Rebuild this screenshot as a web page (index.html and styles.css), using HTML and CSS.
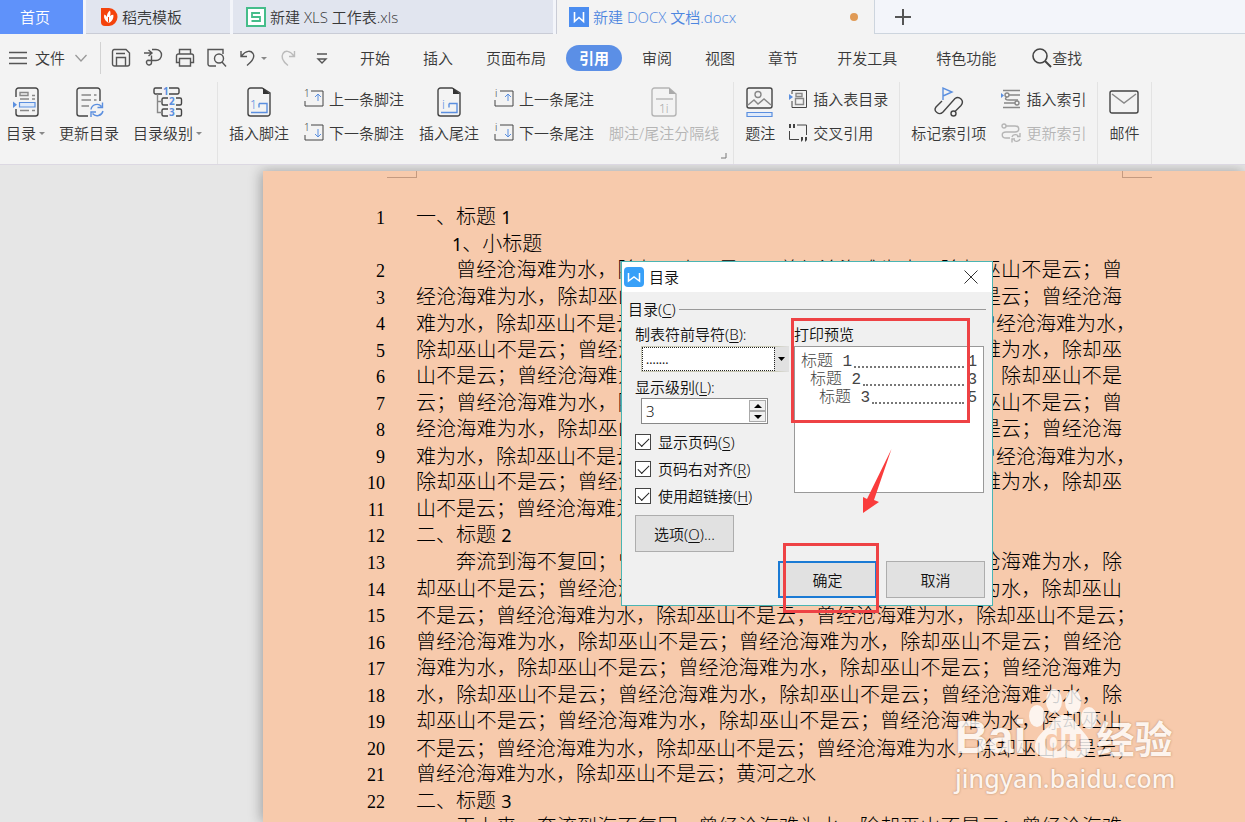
FILE: index.html
```
<!DOCTYPE html>
<html lang="zh-CN">
  <head>
    <meta charset="UTF-8" />
    <meta name="viewport" content="width=device-width, initial-scale=1.0" />
    <title>新建 DOCX 文档.docx</title>
    <link rel="stylesheet" href="styles.css">
  </head>
  <body>
    <!-- 文档标签 -->
    <nav class="tabs">
      <a href="#" class="tab home">首页</a>
      <a href="#" class="tab store">
        <svg width="18" height="20" viewBox="0 0 18 20"><path d="M1 1h8a8.500 9 0 0 1 0 18H5a4 4 0 0 1-4-4z" fill="#f4430c"/><path d="M8.500 16C4 13 3.500 9.500 4.500 7.500c1 .5 2 1.500 2.500 2.500C6.500 7.500 8 5 10 3.500c.5 2 .8 3.500 0 5.500 1-.8 2-1.200 3.300-1.200C14 11 12 15 8.500 16z" fill="#fff"/><path d="M8.500 15.500V10" stroke="#f4430c"/></svg>
        稻壳模板
      </a>
      <a href="#" class="tab sheet">
        <svg width="20" height="20" viewBox="0 0 20 20"><rect x="1" y="1" width="18" height="18" fill="#fff" stroke="#45bd8a" stroke-width="2"/><path d="M14 6H6v4h8v4H5.500" fill="none" stroke="#45bd8a" stroke-width="1.800"/></svg>
        新建 XLS 工作表.xls
      </a>
      <a href="#" class="tab word">
        <svg width="20" height="20" viewBox="0 0 20 20"><rect width="20" height="20" fill="#4b8df0"/><path d="M5.500 5v9.500l4.500-4 4.500 4V5" fill="none" stroke="#fff" stroke-width="1.600"/></svg>
        新建 DOCX 文档.docx
        <i class="dot"></i>
      </a>
      <button class="add" aria-label="新建">
        <svg width="16" height="16" viewBox="0 0 16 16"><path d="M8 0v16M0 8h16" stroke="#555" stroke-width="2"/></svg>
      </button>
    </nav>

    <!-- 菜单 -->
    <div class="menu">
      <button class="file">
        <svg width="18" height="14" viewBox="0 0 18 14"><path d="M0 1.500h18M0 7h18M0 12.500h18" stroke="#555" stroke-width="1.400"/></svg>
        文件
        <svg width="12" height="8" viewBox="0 0 12 8"><path d="M.5 1L6 7l5.500-6" fill="none" stroke="#999" stroke-width="1.300"/></svg>
      </button>
      <div class="quick">
        <button aria-label="保存"><svg width="20" height="20" viewBox="0 0 20 20"><path d="M3 1.500h12l3.500 3.500v11a2 2 0 0 1-2 2h-13a2 2 0 0 1-2-2V3.500a2 2 0 0 1 1.500-2zM5 5.500h9M5.500 18v-8.500h9V18"/></svg></button>
        <button aria-label="输出为PDF"><svg width="20" height="20" viewBox="0 0 20 20"><path d="M1 5h7M5.500 2L9 5 5.500 8M9 1.500h4a5.500 5.500 0 0 1 0 11H8.500M8.500 7.500v7a2.500 2.500 0 1 1-3.500-2.300l3.500 .3"/></svg></button>
        <button aria-label="打印"><svg width="20" height="20" viewBox="0 0 20 20"><path d="M4.500 6V1.500h11V6M4.500 14.500H1.500V8a2 2 0 0 1 2-2h13a2 2 0 0 1 2 2v6.500h-3M4.500 10.500h11v7.500h-11z"/></svg></button>
        <button aria-label="打印预览"><svg width="20" height="20" viewBox="0 0 20 20"><path d="M9 18H3a2 2 0 0 1-2-2V1.500h15V6M15 14l4 4.500"/><circle cx="12" cy="10.500" r="4.500"/></svg></button>
        <button aria-label="撤销"><svg width="28" height="20" viewBox="0 0 28 20"><path d="M2 3v5.500h6M2.500 8C7 2 12 2.500 14 5.500c2.500 4-1 8-6 12"/><path class="caret" d="M22 9h6l-3 3z"/></svg></button>
        <button class="off" aria-label="恢复"><svg width="18" height="20" viewBox="0 0 18 20"><path d="M15.500 3v5.500H10M15 8C10.500 2 6 2.500 4 5.500c-2.500 4 0 8 5 12"/></svg></button>
        <button aria-label="自定义快速访问工具栏"><svg width="12" height="14" viewBox="0 0 12 14"><path d="M1 3h10M2 8h8l-4 4z"/></svg></button>
      </div>
      <div class="pages">
        <a href="#">开始</a>
        <a href="#">插入</a>
        <a href="#">页面布局</a>
        <a href="#" class="active">引用</a>
        <a href="#">审阅</a>
        <a href="#">视图</a>
        <a href="#">章节</a>
        <a href="#" class="wide">开发工具</a>
        <a href="#" class="wide">特色功能</a>
      </div>
      <button class="find">
        <svg width="20" height="20" viewBox="0 0 20 20"><circle cx="8" cy="8" r="7" fill="none" stroke="#444" stroke-width="1.600"/><path d="M13 13l6 6" stroke="#444" stroke-width="2"/></svg>
        查找
      </button>
    </div>

    <!-- 引用功能区 -->
    <div class="ribbon">
      <div class="group first">
        <button class="big">
          <svg width="30" height="30" viewBox="0 0 30 30"><path class="k" d="M5 10V3.500A2.500 2.500 0 0 1 7.500 1h17A2.500 2.500 0 0 1 27 3.500v23a2.500 2.500 0 0 1-2.500 2.500h-17A2.500 2.500 0 0 1 5 26.500V22"/><path class="g" d="M9 5.500h8v3H9zM21 8.500h3M9 12h9M21 12h3M9 23.500h9M21 23.500h3"/><path class="b" d="M8.500 15.500h15.500v4.500H8.500z"/><path d="M2 14.500v6.500l4-3.300z" fill="#5b8fdf"/></svg>
          <span>目录<i class="caret"></i></span>
        </button>
        <button class="big">
          <svg width="30" height="30" viewBox="0 0 30 30"><path class="k" d="M14 29H5.500A2.500 2.500 0 0 1 3 26.500v-23A2.500 2.500 0 0 1 5.500 1h18A2.500 2.500 0 0 1 26 3.500V14"/><path class="g" d="M7.500 8H17M20 8h2.500M7.500 13H17M20 13h2.500M7.500 19H15"/><path class="n" d="M17 22.500a6 6 0 0 1 10.500-3M28.500 15.500v5h-5M29 24a6 6 0 0 1-10.500 2.500M17 30v-5h5"/></svg>
          <span>更新目录</span>
        </button>
        <button class="big">
          <svg width="30" height="30" viewBox="0 0 30 30"><path class="k" d="M9 7H2.500a1.500 1.500 0 0 1-1.500-1.500v-3A1.500 1.500 0 0 1 2.500 1H9M16 1h8.500A1.500 1.500 0 0 1 26 2.500v3A1.500 1.500 0 0 1 24.500 7H16M15 11h-4.500A1.500 1.500 0 0 0 9 12.500v4a1.500 1.500 0 0 0 1.500 1.500H15M23 11h4a1.500 1.500 0 0 1 1.500 1.500v4A1.500 1.500 0 0 1 27 18h-4M15 22h-4.500A1.500 1.500 0 0 0 9 23.500v4a1.500 1.500 0 0 0 1.500 1.500H15M23 22h4a1.500 1.500 0 0 1 1.500 1.500v4A1.500 1.500 0 0 1 27 29h-4"/><path class="g" d="M4.500 7v18.500H9M4.500 14.500H9"/><g class="num"><text x="10" y="8">1</text><text x="16" y="18">2</text><text x="16" y="29">3</text></g></svg>
          <span>目录级别<i class="caret"></i></span>
        </button>
      </div>

      <div class="group notes">
        <button class="big">
          <svg width="30" height="30" viewBox="0 0 30 30"><path class="k" d="M18 1H6.500A2.500 2.500 0 0 0 4 3.500v23A2.500 2.500 0 0 0 6.500 29h17a2.500 2.500 0 0 0 2.500-2.500V6z"/><path d="M19 1v6h7z" fill="#333"/><path class="n" d="M15 16.500h8v9H7M15 16.500v4"/><text class="one" x="6" y="22">1</text></svg>
          <span>插入脚注</span>
        </button>
        <div class="pair">
          <button><svg width="20" height="20" viewBox="0 0 20 20"><path class="k" d="M7 2h12v15H1v-5"/><path class="n" d="M14 12V5M11 8l3-3 3 3"/><text class="tiny" x="0" y="8">1</text></svg>上一条脚注</button>
          <button><svg width="20" height="20" viewBox="0 0 20 20"><path class="k" d="M7 2h12v15H1v-5"/><path class="n" d="M14 6v8M11 11l3 3 3-3"/><text class="tiny" x="0" y="8">1</text></svg>下一条脚注</button>
        </div>
        <button class="big">
          <svg width="30" height="30" viewBox="0 0 30 30"><path class="k" d="M18 1H6.500A2.500 2.500 0 0 0 4 3.500v23A2.500 2.500 0 0 0 6.500 29h17a2.500 2.500 0 0 0 2.500-2.500V6z"/><path d="M19 1v6h7z" fill="#333"/><path class="n" d="M15 16.500h8v9H7M15 16.500v4"/><text class="one" x="8" y="22">i</text></svg>
          <span>插入尾注</span>
        </button>
        <div class="pair">
          <button><svg width="20" height="20" viewBox="0 0 20 20"><path class="k" d="M6 2h13v15H1v-6"/><path class="n" d="M14 12V5M11 8l3-3 3 3"/><text class="tiny" x="1" y="8">i</text></svg>上一条尾注</button>
          <button><svg width="20" height="20" viewBox="0 0 20 20"><path class="k" d="M6 2h13v15H1v-6"/><path class="n" d="M14 6v8M11 11l3 3 3-3"/><text class="tiny" x="1" y="8">i</text></svg>下一条尾注</button>
        </div>
        <button class="big off">
          <svg width="30" height="30" viewBox="0 0 30 30"><path class="k" d="M20 1H5.500A2.500 2.500 0 0 0 3 3.500v23A2.500 2.500 0 0 0 5.500 29h19a2.500 2.500 0 0 0 2.500-2.500V7z"/><path d="M20 1v6h7z" fill="#aaa"/><path class="k" d="M7 12h17"/><text class="one" x="10" y="26">1i</text></svg>
          <span>脚注/尾注分隔线</span>
        </button>
        <svg class="corner" width="6" height="6" viewBox="0 0 6 6"><path d="M5 0v5H0" fill="none" stroke="#777"/></svg>
      </div>

      <div class="group captions">
        <button class="big">
          <svg width="30" height="30" viewBox="0 0 30 30"><rect class="k" x="2" y="1" width="25" height="20" rx="2"/><circle class="g" cx="13" cy="7.500" r="3"/><path class="g" d="M3 18l6-5 4 4 6-5 7 6"/><path class="b" d="M2 25.500h25v4H2z"/></svg>
          <span>题注</span>
        </button>
        <div class="pair">
          <button><svg width="20" height="20" viewBox="0 0 20 20"><path class="k" d="M4 5V1.500h14.500v17H4V12"/><path class="g" d="M8 4.500h6v3H8zM7.500 9.500h8v6h-8z"/><path d="M1 5v6l4-3z" fill="#5b8fdf"/></svg>插入表目录</button>
          <button><svg width="20" height="20" viewBox="0 0 20 20"><path class="k" d="M9 2h9.500v10M1.500 8v8.500H11"/><path d="M1 1h2v4H1zM5 1h2v4H5zM13 14h2v3l-2 2zM17 14h2v3l-2 2z" fill="#444"/></svg>交叉引用</button>
        </div>
      </div>

      <div class="group index">
        <button class="big">
          <svg width="30" height="30" viewBox="0 0 30 30"><path class="n" d="M9 13V1l9 4-9 4"/><circle class="k" cx="19.500" cy="26.500" r="2.500"/><path class="k" d="M21 24.500l6-6c4-5-2-10-6-7L9 25c-4 4-10-1-7-5l6-6"/></svg>
          <span>标记索引项</span>
        </button>
        <div class="pair">
          <button><svg width="20" height="20" viewBox="0 0 20 20"><path class="g" d="M2 1.500h17M2 18.500h17M8 6h11M3 14h11M6 8c-3 2-1 3 2 3h9"/><circle class="g" cx="6" cy="6" r="2"/><circle class="g" cx="16" cy="14" r="2"/><path d="M0 4v5l3-2.500z" fill="#5b8fdf"/></svg>插入索引</button>
          <button class="off"><svg width="20" height="20" viewBox="0 0 20 20"><path class="g" d="M5 3h9c5 0 5 6 0 6H5c-5 0-5 6 0 6h4M11 14c1-3 5-3 6-1M19 10v3.500h-3M19 16c-1 3-5 3-6 1M11 19.500V16h3"/><circle class="g" cx="3" cy="3" r="2"/></svg>更新索引</button>
        </div>
      </div>

      <div class="group mail">
        <button class="big">
          <svg width="30" height="30" viewBox="0 0 30 30"><rect class="k" x="1" y="4" width="28" height="22" rx="2"/><path class="g" d="M3 7l12 9L27 7"/></svg>
          <span>邮件</span>
        </button>
      </div>
    </div>

    <!-- 文档区 -->
    <main class="canvas">
      <article class="paper">
        <div class="marks"><i></i><i></i></div>
        <ol class="lines">
          <li><b>1</b><span>一、标题 <em>1</em></span></li>
          <li class="sub"><b></b><span><em>1</em>、小标题</span></li>
          <li class="full indent"><b>2</b><span>曾经沧海难为水，除却巫山不是云；曾经沧海难为水，除却巫山不是云；曾</span></li>
          <li class="full"><b>3</b><span>经沧海难为水，除却巫山不是云；曾经沧海难为水，除却巫山不是云；曾经沧海</span></li>
          <li class="full"><b>4</b><span>难为水，除却巫山不是云；曾经沧海难为水，除却巫山不是云；曾经沧海难为水<u>，</u></span></li>
          <li class="full"><b>5</b><span>除却巫山不是云；曾经沧海难为水，除却巫山不是云；曾经沧海难为水，除却巫</span></li>
          <li class="full"><b>6</b><span>山不是云；曾经沧海难为水，除却巫山不是云；曾经沧海难为水，除却巫山不是</span></li>
          <li class="full"><b>7</b><span>云；曾经沧海难为水，除却巫山不是云；曾经沧海难为水，除却巫山不是云；曾</span></li>
          <li class="full"><b>8</b><span>经沧海难为水，除却巫山不是云；曾经沧海难为水，除却巫山不是云；曾经沧海</span></li>
          <li class="full"><b>9</b><span>难为水，除却巫山不是云；曾经沧海难为水，除却巫山不是云；曾经沧海难为水<u>，</u></span></li>
          <li class="full"><b>10</b><span>除却巫山不是云；曾经沧海难为水，除却巫山不是云；曾经沧海难为水，除却巫</span></li>
          <li><b>11</b><span>山不是云；曾经沧海难为水，除却巫山不是云；曾经沧海难为水。</span></li>
          <li><b>12</b><span>二、标题 <em>2</em></span></li>
          <li class="full indent"><b>13</b><span>奔流到海不复回；曾经沧海难为水，除却巫山不是云；曾经沧海难为水，除</span></li>
          <li class="full"><b>14</b><span>却巫山不是云；曾经沧海难为水，除却巫山不是云；曾经沧海难为水，除却巫山</span></li>
          <li class="full"><b>15</b><span>不是云；曾经沧海难为水，除却巫山不是云；曾经沧海难为水，除却巫山不是云<u>；</u></span></li>
          <li class="full"><b>16</b><span>曾经沧海难为水，除却巫山不是云；曾经沧海难为水，除却巫山不是云；曾经沧</span></li>
          <li class="full"><b>17</b><span>海难为水，除却巫山不是云；曾经沧海难为水，除却巫山不是云；曾经沧海难为</span></li>
          <li class="full"><b>18</b><span>水，除却巫山不是云；曾经沧海难为水，除却巫山不是云；曾经沧海难为水，除</span></li>
          <li class="full"><b>19</b><span>却巫山不是云；曾经沧海难为水，除却巫山不是云；曾经沧海难为水，除却巫山</span></li>
          <li class="full"><b>20</b><span>不是云；曾经沧海难为水，除却巫山不是云；曾经沧海难为水，除却巫山不是云<u>；</u></span></li>
          <li><b>21</b><span>曾经沧海难为水，除却巫山不是云；黄河之水</span></li>
          <li><b>22</b><span>二、标题 <em>3</em></span></li>
          <li class="full indent"><b></b><span>天上来，奔流到海不复回，曾经沧海难为水，除却巫山不是云；曾经沧海难</span></li>
        </ol>
      </article>

      <!-- 目录对话框 -->
      <form class="dialog">
        <header>
          <svg width="20" height="20" viewBox="0 0 20 20"><rect width="20" height="20" rx="4" fill="#38a0f8"/><path d="M4.500 6v8l5.500-4 5.500 4V6" fill="none" stroke="#fff" stroke-width="1.500"/></svg>
          <h1>目录</h1>
          <button type="button" class="close" aria-label="关闭"><svg width="14" height="14" viewBox="0 0 14 14"><path d="M.5 .5l13 13M13.500 .5l-13 13" stroke="#333"/></svg></button>
        </header>
        <div class="legend">目录(<ins>C</ins>)</div>
        <div class="cols">
          <div class="opts">
            <label for="leader">制表符前导符(<ins>B</ins>):</label>
            <div class="combo">
              <select id="leader"><option>.......</option></select>
              <svg width="7" height="4" viewBox="0 0 7 4"><path d="M0 0h7L3.500 4z"/></svg>
            </div>
            <label for="level">显示级别(<ins>L</ins>):</label>
            <div class="spin">
              <input id="level" type="text" value="3">
              <div class="arrows">
                <button type="button" aria-label="增加"><svg width="8" height="4" viewBox="0 0 8 4"><path d="M0 4h8L4 0z"/></svg></button>
                <button type="button" aria-label="减少"><svg width="8" height="4" viewBox="0 0 8 4"><path d="M0 0h8L4 4z"/></svg></button>
              </div>
            </div>
            <label class="check"><input type="checkbox" checked>显示页码(<ins>S</ins>)</label>
            <label class="check"><input type="checkbox" checked>页码右对齐(<ins>R</ins>)</label>
            <label class="check"><input type="checkbox" checked>使用超链接(<ins>H</ins>)</label>
            <button type="button" class="btn">选项(<ins>O</ins>)...</button>
          </div>
          <div class="preview">
            <div class="title">打印预览</div>
            <div class="toc">
              <p>标题 1<i></i>1</p>
              <p>标题 2<i></i>3</p>
              <p>标题 3<i></i>5</p>
            </div>
          </div>
        </div>
        <footer>
          <button type="button" class="btn ok">确定</button>
          <button type="button" class="btn">取消</button>
        </footer>
        <div class="box box-preview"></div>
        <div class="box box-ok"></div>
        <svg class="arrow" width="30" height="66" viewBox="0 0 30 66"><path d="M29.500 0L12 51l5 2L1 64 1 48l4 2z" fill="#fa3c3c"/></svg>
      </form>

      <div class="watermark">
        <div class="brand">
          <span>Bai</span>
          <svg width="70" height="72" viewBox="0 0 70 72"><g fill="#fff"><ellipse cx="10" cy="28" rx="8" ry="11"/><ellipse cx="27" cy="13" rx="8" ry="12"/><ellipse cx="46" cy="14" rx="8" ry="12"/><ellipse cx="62" cy="30" rx="8" ry="11"/><path d="M36 27c8 0 11 6 16 12 6 7 13 13 11 22-2 9-11 10-19 9-6-1-10-1-15 0-11 1-20-1-21-10-1-9 6-15 13-21 5-5 7-12 15-12z"/></g><text x="17" y="63">du</text></svg>
          <span class="cn">经验</span>
        </div>
        <div class="site">jingyan.baidu.com</div>
      </div>
    </main>
  </body>
</html>
```
FILE: styles.css
```
* {
  box-sizing: border-box;
}
body {
  margin: 0;
  height: 100vh;
  display: flex;
  flex-direction: column;
  overflow: hidden;
  background: #f3f3f3;
  color: #383838;
  font: 15px/20px 'Noto Sans', 'Noto Sans CJK SC', sans-serif;
  font-weight: 350;
}
a {
  color: inherit;
  text-decoration: none;
}
button {
  margin: 0;
  padding: 0;
  border: 0;
  background: none;
  color: inherit;
  font: inherit;
  white-space: nowrap;
}
svg {
  display: block;
  flex: none;
  overflow: visible;
}

/* 文档标签 */
.tabs {
  display: flex;
  height: 34px;
  background: #f3f5fa;
}
.tab {
  display: flex;
  align-items: center;
  gap: 4px;
  margin-right: 3px;
  border-bottom: 1px solid #c9ccd6;
  background: #e1e5ef;
  white-space: nowrap;
}
.home {
  width: 83px;
  padding-left: 20px;
  border-color: #5f92fa;
  background: #5f92fa;
  color: #fff;
}
.store {
  width: 144px;
  padding-left: 14px;
}
.sheet {
  width: 320px;
  padding-left: 13px;
}
.word {
  width: 318px;
  margin: 0;
  padding: 0 16px 0 12px;
  border-left: 1px solid #c9ccd6;
  border-bottom: 0;
  background: #f3f3f3;
  color: #4d86e0;
}
.sheet,
.word {
  font-family: 'Open Sans', 'Noto Sans CJK SC', sans-serif;
}
.dot {
  width: 8px;
  height: 8px;
  margin-left: auto;
  border-radius: 50%;
  background: #e09a55;
}
.add {
  flex: 1;
  padding-left: 20px;
  border-left: 1px solid #cdd5de;
  border-bottom: 1px solid #cdd5de;
}

/* 菜单 */
.menu {
  display: flex;
  align-items: center;
  height: 48px;
  padding-left: 9px;
}
.file {
  display: flex;
  align-items: center;
  gap: 8px;
  height: 32px;
  padding-right: 13px;
  border-right: 1px solid #d2d2d2;
}
.file svg:last-child {
  margin-left: 2px;
}
.quick {
  display: flex;
  align-items: center;
  gap: 12px;
  padding-left: 10px;
}
.quick path,
.quick circle {
  fill: none;
  stroke: #555;
  stroke-width: 1.4;
}
.quick .caret {
  fill: #888;
  stroke: none;
}
.quick .off path {
  stroke: #bbb;
}
.quick button:last-child {
  margin-left: 7px;
}
.pages {
  display: flex;
  gap: 1px;
  padding-left: 16px;
}
.pages a {
  padding: 3px 16px;
}
.pages .wide {
  margin-left: 6px;
}
.pages .active {
  margin: 0 3px;
  padding: 3px 13px;
  border-radius: 13px;
  background: #5b8fe6;
  color: #fff;
  font-weight: 700;
}
.find {
  display: flex;
  align-items: center;
  margin-left: 20px;
}

/* 功能区 */
.ribbon {
  display: flex;
  height: 83px;
  border-bottom: 1px solid #dcd8e2;
}
.group {
  display: flex;
  align-items: flex-start;
  gap: 15px;
  padding: 5px 11px 0;
  border-right: 1px solid #e3e3e3;
}
.first {
  gap: 14px;
  padding-left: 6px;
  padding-right: 15px;
}
.notes {
  position: relative;
  padding-right: 14px;
}
.captions {
  gap: 13px;
}
.index {
  gap: 15px;
}
.mail {
  padding-right: 12px;
}
.big {
  display: flex;
  flex-direction: column;
  align-items: center;
  gap: 6px;
}
.big span {
  display: flex;
  align-items: center;
}
.big .caret {
  margin-left: 3px;
  border: 3px solid transparent;
  border-top-color: #888;
  border-bottom: 0;
}
.pair {
  display: flex;
  flex-direction: column;
  gap: 14px;
  padding-top: 2px;
}
.pair button {
  display: flex;
  align-items: center;
  gap: 5px;
}
.ribbon .off {
  color: #b5b5b5;
}
.k,
.g,
.n {
  fill: none;
  stroke: #444;
  stroke-width: 1.4;
}
.g {
  stroke: #888;
}
.n {
  stroke: #5b8fdf;
}
.pair .k,
.pair .n {
  stroke-width: 1;
}
.b {
  fill: #dfeafa;
  stroke: #5b8fdf;
  stroke-width: 1.2;
}
.off .k,
.off .g {
  stroke: #b5b5b5;
}
.num {
  fill: #5b8fdf;
  font-size: 10px;
  font-weight: 700;
}
.one {
  fill: #5b8fdf;
  font-size: 12px;
}
.off .one {
  fill: #aaa;
}
.tiny {
  fill: #444;
  font-size: 10px;
}
.corner {
  position: absolute;
  right: 6px;
  bottom: 5px;
}

/* 文档 */
.canvas {
  position: relative;
  display: flex;
  flex: 1;
  min-height: 0;
  overflow: hidden;
  padding: 6px 0 0 263px;
  background: #e6e6e6;
}
.paper {
  display: flex;
  flex: 1;
  flex-direction: column;
  min-width: 0;
  background: #f7caac;
  box-shadow: -2px 0 12px rgba(0, 0, 0, 0.3);
}
.marks {
  display: flex;
  justify-content: space-between;
  padding: 0 93px 0 124px;
}
.marks i {
  width: 30px;
  height: 7px;
  border: solid #c49a80;
  border-width: 0 1px 1px 0;
}
.marks i:last-child {
  border-width: 0 0 1px 1px;
}
.lines {
  display: grid;
  flex: 1;
  grid-template-columns: minmax(0, 1fr);
  grid-auto-rows: minmax(0, 1fr);
  min-height: 0;
  margin: 26px 0 -19px;
  padding: 0;
  list-style: none;
  color: #000;
  font-size: 20px;
  font-weight: 300;
  line-height: 26px;
}
.lines li {
  display: grid;
  grid-template-columns: 122px minmax(0, 1fr);
  column-gap: 31px;
  padding-right: 123px;
  white-space: nowrap;
}
.lines b {
  font: 18px/28px 'Liberation Serif', serif;
  text-align: right;
}
.lines em {
  font: 400 18px/26px 'Noto Sans', sans-serif;
}
.lines u {
  text-decoration: none;
  font-family: 'Noto Sans CJK SC', sans-serif;
  font-feature-settings: 'halt';
}
.full span {
  text-align: justify;
  text-align-last: justify;
}
.indent span {
  padding-left: 40px;
}
.sub span {
  padding-left: 36px;
}

/* 对话框 */
.dialog {
  position: absolute;
  left: 621px;
  top: 96px;
  width: 372px;
  border: 1px solid #4ab5b3;
  background: #f0f0f0;
  color: #111;
}
.dialog header {
  display: flex;
  align-items: center;
  gap: 5px;
  height: 30px;
  padding: 0 14px 0 2px;
  background: #fff;
}
.dialog h1 {
  margin: 0;
  font-size: 15px;
  font-weight: 350;
}
.close {
  margin-left: auto;
}
ins {
  text-underline-offset: 2px;
}
.legend {
  display: flex;
  align-items: center;
  padding: 7px 6px 0;
}
.legend::after {
  content: '';
  flex: 1;
  margin-left: 3px;
  border-top: 1px solid #999;
}
.cols {
  display: flex;
  justify-content: space-between;
  padding: 5px 8px 0 13px;
}
.opts {
  display: flex;
  flex-direction: column;
  align-items: flex-start;
}
.combo {
  position: relative;
  margin: 2px 0 5px 6px;
}
.combo select {
  display: block;
  width: 148px;
  height: 26px;
  padding: 0 4px;
  border: 1px solid #c8c8b4;
  border-right: 15px solid #e1e1e1;
  background: #fff;
  color: #111;
  appearance: none;
  font: 12px 'Noto Sans', sans-serif;
}
.combo::after {
  content: '';
  position: absolute;
  inset: 1px 14px 1px 1px;
  border: 1px dotted #222;
  pointer-events: none;
}
.combo svg {
  position: absolute;
  right: 4px;
  top: 11px;
}
.spin {
  display: flex;
  width: 127px;
  height: 26px;
  margin: 1px 0 4px 6px;
  padding: 1px;
  border: 1px solid #888;
  background: #fff;
}
.spin input {
  flex: 1;
  min-width: 0;
  padding: 0 3px;
  border: 0;
  background: none;
  color: #111;
  font: inherit;
}
.arrows {
  display: flex;
  flex-direction: column;
  width: 17px;
}
.arrows button {
  display: flex;
  flex: 1;
  align-items: center;
  justify-content: center;
  border: 1px solid #aaa;
  background: #f0f0f0;
}
.check {
  display: flex;
  align-items: center;
  height: 27px;
}
.check input {
  width: 16px;
  height: 16px;
  margin: 0 7px 0 0;
  border: 1px solid #444;
  background: #fff;
  appearance: none;
}
.check input:checked::before {
  content: '';
  display: block;
  width: 10px;
  height: 5px;
  margin: 3px 2px;
  border: solid #222;
  border-width: 0 0 1px 1px;
  transform: rotate(-45deg);
}
.btn {
  width: 99px;
  height: 37px;
  border: 1px solid #adadad;
  background: #e1e1e1;
}
.opts .btn {
  margin-top: 6px;
}
.preview {
  display: flex;
  flex-direction: column;
  width: 190px;
}
.toc {
  height: 147px;
  margin-top: 2px;
  padding: 6px;
  border: 1px solid #999;
  background: #fff;
  font: 16px/18px 'Liberation Mono', 'Noto Sans CJK SC', monospace;
  font-weight: 300;
  color: #444;
}
.toc p {
  display: flex;
  margin: 0;
}
.toc p:nth-child(2) {
  padding-left: 9px;
}
.toc p:nth-child(3) {
  padding-left: 18px;
}
.toc i {
  flex: 1;
  height: 15px;
  margin: 0 3px 0 2px;
  border-bottom: 2px dotted #777;
}
.dialog footer {
  display: flex;
  justify-content: flex-end;
  gap: 9px;
  padding: 9px 7px 7px;
}
.ok {
  border: 2px solid #1a7ad4;
}
.box {
  position: absolute;
  border: 3px solid #ee4245;
}
.box-preview {
  left: 169px;
  top: 56px;
  width: 179px;
  height: 105px;
}
.box-ok {
  left: 161px;
  top: 281px;
  width: 96px;
  height: 70px;
}
.arrow {
  position: absolute;
  left: 240px;
  top: 187px;
}

/* 水印 */
.watermark {
  position: absolute;
  left: 955px;
  top: 523px;
  color: #fff;
  opacity: 0.8;
  text-shadow: 0 0 2px rgba(120, 80, 50, 0.7);
}
.brand {
  display: flex;
  align-items: flex-end;
  font: 700 46px/46px 'Liberation Sans', sans-serif;
}
.brand text {
  fill: #f7caac;
  font-size: 32px;
  text-shadow: none;
}
.brand .cn {
  font: 700 38px/46px 'Noto Sans CJK SC', sans-serif;
}
.site {
  font: 500 25px/36px 'Noto Sans', sans-serif;
}
```
